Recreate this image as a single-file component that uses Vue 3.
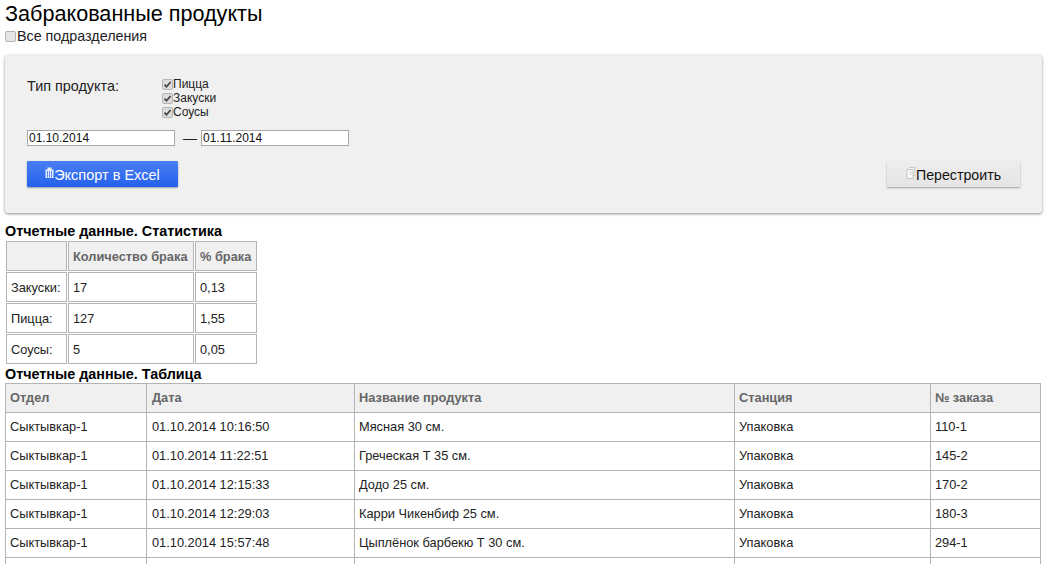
<script setup>
const stats = [
  ['Закуски:', '17', '0,13'],
  ['Пицца:', '127', '1,55'],
  ['Соусы:', '5', '0,05'],
]
const rows = [
  ['01.10.2014 10:16:50', 'Мясная 30 см.', '110-1'],
  ['01.10.2014 11:22:51', 'Греческая Т 35 см.', '145-2'],
  ['01.10.2014 12:15:33', 'Додо 25 см.', '170-2'],
  ['01.10.2014 12:29:03', 'Карри Чикенбиф 25 см.', '180-3'],
  ['01.10.2014 15:57:48', 'Цыплёнок барбекю Т 30 см.', '294-1'],
  ['', '', ''],
]
const types = ['Пицца', 'Закуски', 'Соусы']
</script>

<template>
  <div class="page">
    <h1 class="title">Забракованные продукты</h1>
    <label class="all"><span class="cb"></span>Все подразделения</label>
    <section class="panel">
      <div class="types">
        <div class="types-label">Тип продукта:</div>
        <div class="types-list">
          <label v-for="t in types" :key="t" class="type">
            <span class="cb checked">
              <svg width="9" height="9" viewBox="0 0 9 9"><path d="M1.5 4.6 3.5 6.8 7.6 2" fill="none" stroke="#444" stroke-width="1.7"/></svg>
            </span>{{ t }}
          </label>
        </div>
      </div>
      <div class="dates">
        <input class="date" value="01.10.2014" />
        <span class="dash">—</span>
        <input class="date" value="01.11.2014" />
      </div>
      <div class="buttons">
        <button class="btn primary">
          <svg class="ico" width="9" height="13" viewBox="0 0 9 13"><path d="M2.5 1.5h4v2h2v8.5H.5V3.500h2z" fill="#e6edff"/><path d="M2.500 5v6.500M4.500 5v6.500M6.500 5v6.500" stroke="#3f70e8" stroke-width=".8"/></svg>Экспорт в Excel
        </button>
        <button class="btn plain">
          <svg class="ico" width="10" height="12" viewBox="0 0 10 12"><path d="M3 .5h6v8H7" fill="#f6f6f6" stroke="#c8c8c8"/><path d="M1 2.500h6v9H1z" fill="#fbfbfb" stroke="#c2c2c2"/><path d="M3 5h3M3 7h3" stroke="#d0d0d0"/></svg>Перестроить
        </button>
      </div>
    </section>
    <h2 class="sub">Отчетные данные. Статистика</h2>
    <table class="stats">
      <colgroup><col class="s1" /><col class="s2" /><col class="s3" /></colgroup>
      <thead><tr><th></th><th>Количество брака</th><th>% брака</th></tr></thead>
      <tbody>
        <tr v-for="s in stats" :key="s[0]"><td>{{ s[0] }}</td><td>{{ s[1] }}</td><td>{{ s[2] }}</td></tr>
      </tbody>
    </table>
    <h2 class="sub second">Отчетные данные. Таблица</h2>
    <table class="data">
      <colgroup><col class="d1" /><col class="d2" /><col class="d3" /><col class="d4" /><col class="d5" /></colgroup>
      <thead><tr><th>Отдел</th><th>Дата</th><th>Название продукта</th><th>Станция</th><th>№ заказа</th></tr></thead>
      <tbody>
        <tr v-for="(r, i) in rows" :key="i">
          <td>{{ r[0] ? 'Сыктывкар-1' : '' }}</td><td>{{ r[0] }}</td><td>{{ r[1] }}</td><td>{{ r[0] ? 'Упаковка' : '' }}</td><td>{{ r[2] }}</td>
        </tr>
      </tbody>
    </table>
  </div>
</template>

<style>
html, body { margin: 0; background: #fff; overflow: hidden; }
</style>

<style scoped>
.page { font-family: "Liberation Sans", Arial, sans-serif; color: #000; padding: 0 11px 0 5px; height: 564px; overflow: hidden; box-sizing: border-box; }
.title { font-size: 21.6px; font-weight: 400; line-height: 28px; margin: 0; }
.all { display: flex; align-items: center; font-size: 14.3px; line-height: 16px; height: 16px; color: #222; }
.cb { margin-right: 1px; border: 1px solid #b4b4b4; border-radius: 2px; background: #e6e6e6; width: 9px; height: 9px; display: inline-flex; flex: none; }
.panel { margin-top: 11px; height: 158px; background: #f0f0f0; border-radius: 3px; box-shadow: 0 1px 3px rgba(0,0,0,.45); padding: 23px 22px 0 22px; box-sizing: border-box; display: flex; flex-direction: column; }
.types { display: flex; }
.types-label { width: 135px; font-size: 14.4px; line-height: 16px; color: #222; }
.types-list { display: flex; flex-direction: column; font-size: 12px; line-height: 14px; margin-top: -1px; color: #222; }
.type { display: flex; align-items: center; height: 14px; }
.type .cb { margin-right: 0; background: #dcdcdc; }
.dates { display: flex; align-items: center; margin-top: 11px; }
.date { width: 148px; height: 16px; box-sizing: border-box; border: 1px solid #a9a9a9; padding: 0 1px; font: 12px "Liberation Sans", Arial, sans-serif; background: #fff; color: #111; outline: none; }
.dash { width: 26px; box-sizing: border-box; padding-left: 4px; text-align: center; font-size: 14px; color: #222; }
.buttons { display: flex; justify-content: space-between; margin-top: 15px; }
.btn { height: 26px; border: 0; border-radius: 1px; display: flex; align-items: center; justify-content: center; padding: 2px 0 0; box-sizing: border-box; box-shadow: 0 1px 2px rgba(0,0,0,.35); font-family: "Liberation Sans", Arial, sans-serif; font-size: 14.2px; }
.ico { margin-top: -5px; }
.primary { width: 151px; color: #fff; background: linear-gradient(#4a7ef2, #2461ec); font-size: 14.5px; }
.plain { width: 133px; color: #111; background: linear-gradient(#eeeded, #e6e4e4); }
.sub { font-size: 14.35px; font-weight: 700; line-height: 15px; margin: 11px 0 0; }
.second { margin-top: 0; line-height: 18px; }
.stats { border-collapse: separate; border-spacing: 1px; table-layout: fixed; width: 253px; margin: 1px 0 0; font-size: 12.8px; color: #222; }
.s1 { width: 61px; } .s2 { width: 126px; } .s3 { width: 62px; }
.stats th, .stats td { border: 1px solid #b4b4b4; height: 30px; box-sizing: border-box; padding: 0 4px; text-align: left; }
.stats th { background: #f0f0f0; color: #666; font-weight: 700; }
.data { border-collapse: collapse; table-layout: fixed; width: 1036px; font-size: 12.8px; color: #222; }
.d1 { width: 141px; } .d2 { width: 208px; } .d3 { width: 380px; } .d4 { width: 196px; }
.data th, .data td { border: 1px solid #b4b4b4; height: 29px; box-sizing: border-box; padding: 0 4px 2px; text-align: left; }
.data th:nth-child(2), .data td:nth-child(2) { padding-left: 5px; }
.data th { background: #f0f0f0; color: #666; font-weight: 700; }
</style>
